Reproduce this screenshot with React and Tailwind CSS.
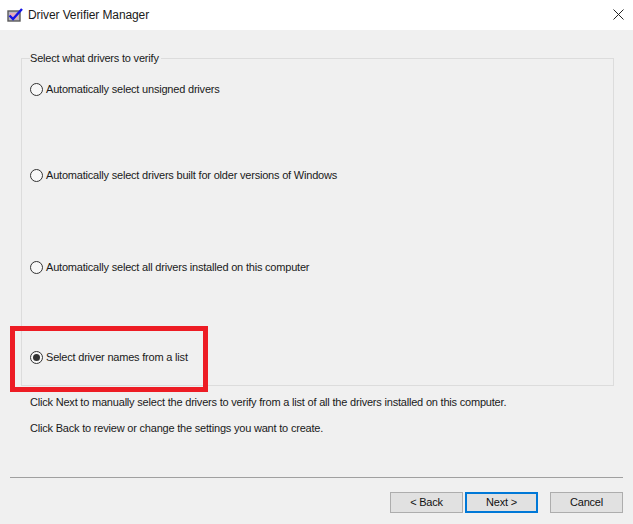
import React from "react";

const options = [
  { label: "Automatically select unsigned drivers", top: "mt-[13px]" },
  { label: "Automatically select drivers built for older versions of Windows", top: "mt-[66px]" },
  { label: "Automatically select all drivers installed on this computer", top: "mt-[72px]" },
  { label: "Select driver names from a list", top: "mt-[70px]", checked: true },
];

function Radio({ checked }) {
  return (
    <span className="flex h-[13px] w-[13px] shrink-0 items-center justify-center rounded-full border border-[#333333] bg-[#f8f8f8]">
      {checked && <span className="h-[7px] w-[7px] rounded-full bg-[#333333]" />}
    </span>
  );
}

function AppIcon() {
  return (
    <svg width="17" height="16" viewBox="0 0 17 16" className="shrink-0">
      <rect x="1" y="4" width="12" height="10" fill="#b9b4c4" stroke="#5a5a5a" strokeWidth="1.4" />
      <rect x="3" y="6" width="8" height="6" fill="#e6a9b8" />
      <path d="M2.5 8.5 L6 12 L15 2" fill="none" stroke="#1414e6" strokeWidth="2.4" />
    </svg>
  );
}

function Button({ children, primary, className = "" }) {
  return (
    <button
      className={`h-[21px] w-[73px] bg-[#e1e1e1] text-center leading-none text-[#111111] ${
        primary ? "border-2 border-[#0078d7]" : "border border-[#adadad]"
      } ${className}`}
    >
      {children}
    </button>
  );
}

export default function App() {
  return (
    <div className="relative flex h-[524px] w-[633px] flex-col overflow-hidden bg-[#f0f0f0] font-['Liberation_Sans',sans-serif] text-[11px] tracking-[-0.2px] text-[#1a1a1a]">
      {/* title bar */}
      <div className="flex h-[30px] items-center justify-between bg-white pl-[7px] pr-[9px]">
        <div className="flex items-center gap-[4px]">
          <AppIcon />
          <span className="text-[12px] tracking-[-0.1px]">Driver Verifier Manager</span>
        </div>
        <svg width="11" height="11" viewBox="0 0 11 11" className="mb-[1px]">
          <path d="M0.5 0.5 L10.5 10.5 M10.5 0.5 L0.5 10.5" stroke="#222222" strokeWidth="1" />
        </svg>
      </div>

      <div className="flex flex-1 flex-col px-[21px] pt-[20px]">
        <fieldset className="h-[336px] w-[593px] border border-[#dcdcdc] pl-[8px]">
          <legend className="h-[16px] pr-[2px] leading-[16px]">Select what drivers to verify</legend>
          {options.map((opt) => (
            <label key={opt.label} className={`flex h-[20px] items-center gap-[3px] ${opt.top}`}>
              <Radio checked={opt.checked} />
              <span>{opt.label}</span>
            </label>
          ))}
        </fieldset>
        <p className="mt-[8px] pl-[9px] leading-[16px]">
          Click Next to manually select the drivers to verify from a list of all the drivers installed on this computer.
        </p>
        <p className="mt-[10px] pl-[9px] leading-[16px]">
          Click Back to review or change the settings you want to create.
        </p>
      </div>

      {/* footer */}
      <div className="mx-[10px] h-[47px] border-t border-[#a0a0a0] pt-[14px]">
        <div className="flex justify-end">
          <Button>&lt; Back</Button>
          <Button primary className="ml-[2px]">Next &gt;</Button>
          <Button className="ml-[12px]">Cancel</Button>
        </div>
      </div>

      {/* red annotation */}
      <div className="absolute left-[10px] top-[326px] h-[66px] w-[198px] border-[5px] border-[#ed1c24]" />
    </div>
  );
}
